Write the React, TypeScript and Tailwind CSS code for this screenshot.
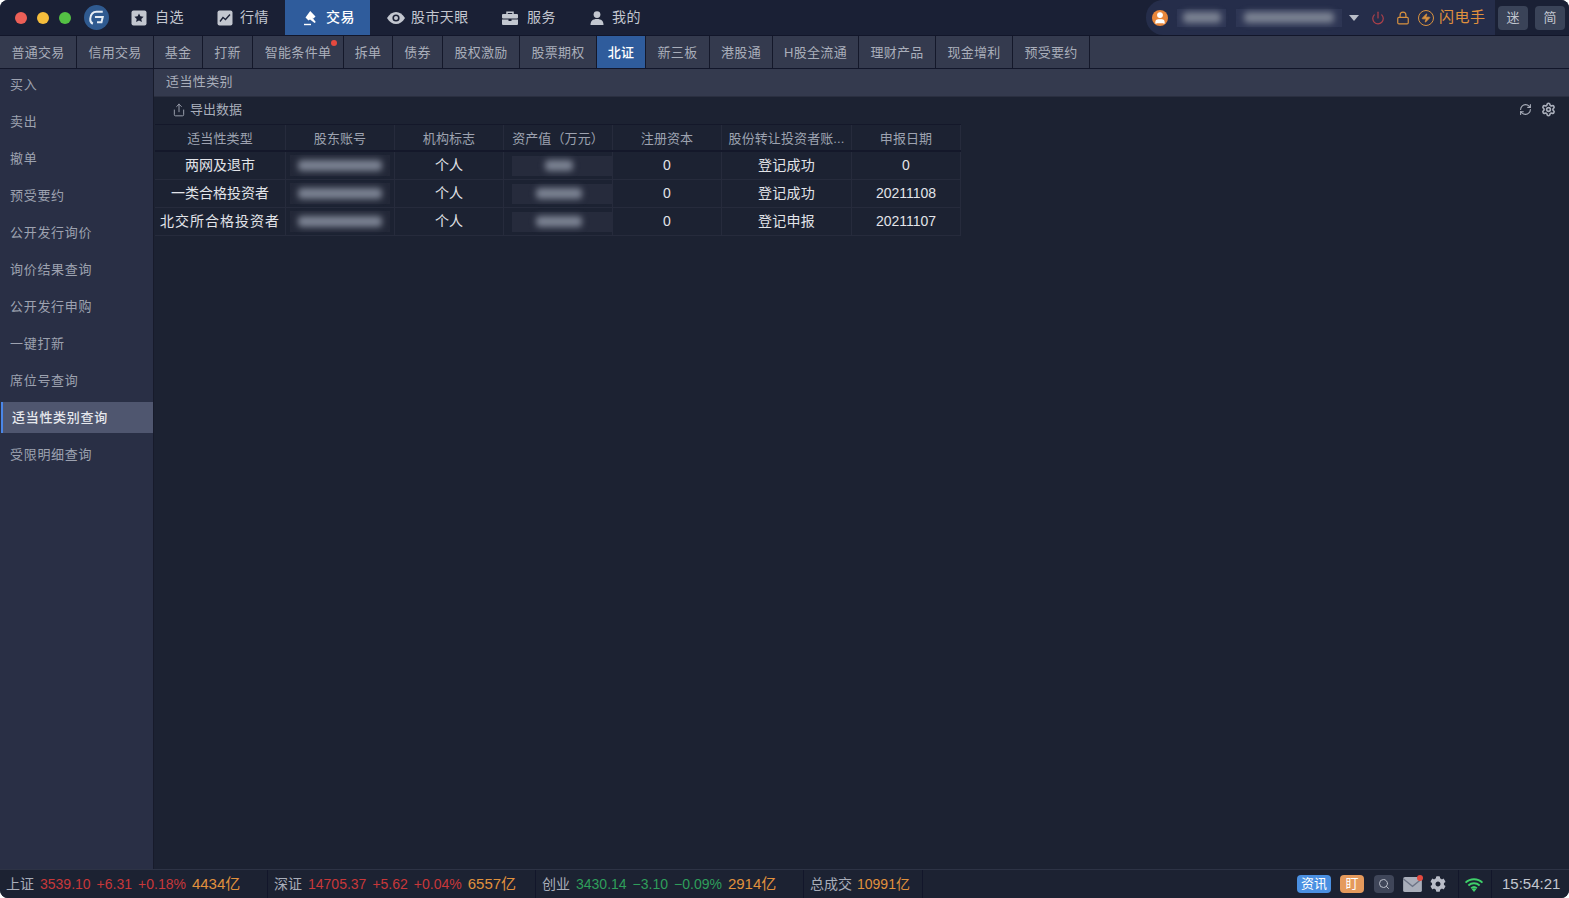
import { User, Share, RefreshCw, Settings, Search, Power, Lock, Zap } from 'lucide-react'
import { FaCog } from 'react-icons/fa'

const mainNav = [
  { label: '自选', icon: 'star', width: 'w-[85px]', pad: 'pl-[17px]', gap: 'gap-[8px]' },
  { label: '行情', icon: 'chart', width: 'w-[86px]', pad: 'pl-[18px]', gap: 'gap-[7px]' },
  { label: '交易', icon: 'gavel', width: 'w-[85px]', pad: 'pl-[17px]', gap: 'gap-[8px]', active: true },
  { label: '股市天眼', icon: 'eye', width: 'w-[115px]', pad: 'pl-[17px]', gap: 'gap-[6px]' },
  { label: '服务', icon: 'case', width: 'w-[86px]', pad: 'pl-[17px]', gap: 'gap-[9px]' },
  { label: '我的', icon: 'user', width: 'w-[86px]', pad: 'pl-[19px]', gap: 'gap-[8px]' },
]

const tabs = [
  { label: '普通交易', width: 'w-[77px]' },
  { label: '信用交易', width: 'w-[77px]' },
  { label: '基金', width: 'w-[49px]' },
  { label: '打新', width: 'w-[50px]' },
  { label: '智能条件单', width: 'w-[91px]', dot: true },
  { label: '拆单', width: 'w-[49px]' },
  { label: '债券', width: 'w-[50px]' },
  { label: '股权激励', width: 'w-[77px]' },
  { label: '股票期权', width: 'w-[77px]' },
  { label: '北证', width: 'w-[49px]', active: true },
  { label: '新三板', width: 'w-[64px]' },
  { label: '港股通', width: 'w-[63px]' },
  { label: 'H股全流通', width: 'w-[86px]' },
  { label: '理财产品', width: 'w-[77px]' },
  { label: '现金增利', width: 'w-[77px]' },
  { label: '预受要约', width: 'w-[77px]' },
]

const sideItems = ['买入', '卖出', '撤单', '预受要约', '公开发行询价', '询价结果查询', '公开发行申购', '一键打新', '席位号查询', '适当性类别查询', '受限明细查询']

const columns = [
  { title: '适当性类型', width: 'w-[131px]' },
  { title: '股东账号', width: 'w-[109px]' },
  { title: '机构标志', width: 'w-[109px]' },
  { title: '资产值（万元）', width: 'w-[109px]' },
  { title: '注册资本', width: 'w-[109px]' },
  { title: '股份转让投资者账...', width: 'w-[130px]' },
  { title: '申报日期', width: 'w-[109px]' },
]

const rows = [
  { type: '两网及退市', typeClass: '', value: 'w-[28px] -translate-x-[3px]', status: '登记成功', date: '0' },
  { type: '一类合格投资者', typeClass: '', value: 'w-[46px] -translate-x-[3px]', status: '登记成功', date: '20211108' },
  { type: '北交所合格投资者', typeClass: 'tracking-[1px]', value: 'w-[46px] -translate-x-[3px]', status: '登记申报', date: '20211107' },
]

const markets = [
  { name: '上证', width: 'w-[268px]', price: '3539.10', change: '+6.31', pct: '+0.18%', amount: '4434亿', color: 'text-[#c8383a]' },
  { name: '深证', width: 'w-[268px]', price: '14705.37', change: '+5.62', pct: '+0.04%', amount: '6557亿', color: 'text-[#c8383a]' },
  { name: '创业', width: 'w-[268px]', price: '3430.14', change: '−3.10', pct: '−0.09%', amount: '2914亿', color: 'text-[#2f9e5b]' },
]

function NavIcon({ name }: { name: string }) {
  if (name === 'star') {
    return (
      <svg viewBox="0 0 16 16" className="h-4 w-4">
        <rect x="0.5" y="0.5" width="15" height="15" rx="2" fill="#c3c7d0" />
        <path d="M8 3.4l1.4 2.9 3.2.4-2.3 2.2.6 3.1L8 10.5l-2.9 1.5.6-3.1-2.3-2.2 3.2-.4z" fill="#1a2035" />
      </svg>
    )
  }
  if (name === 'chart') {
    return (
      <svg viewBox="0 0 16 16" className="h-4 w-4">
        <rect x="0.5" y="0.5" width="15" height="15" rx="2" fill="#c3c7d0" />
        <path d="M3 11.5l3-4 2.5 2L13 4.5" fill="none" stroke="#1a2035" strokeWidth="1.3" />
      </svg>
    )
  }
  if (name === 'gavel') {
    return (
      <svg viewBox="0 0 16 16" className="h-4 w-4">
        <path d="M8.2 1l5.3 5.6-2 1.8-1.3-.9L13.8 12l-1.2 1-4.6-3.6-1.5 1.2-3-3.2z" fill="#fff" />
        <rect x="2" y="13.8" width="7" height="1.4" fill="#fff" />
      </svg>
    )
  }
  if (name === 'eye') {
    return (
      <svg viewBox="0 0 18 12" className="h-[12px] w-[18px]">
        <path d="M0 6C2.5 2 5.5 0 9 0s6.5 2 9 6c-2.5 4-5.500 6-9 6S2.500 10 0 6z" fill="#c3c7d0" />
        <circle cx="9" cy="6" r="3.6" fill="#1a2035" />
        <circle cx="9" cy="6" r="2" fill="#c3c7d0" />
      </svg>
    )
  }
  if (name === 'case') {
    return (
      <svg viewBox="0 0 16 14" className="h-[14px] w-4">
        <path d="M5 3V1.200h6V3" fill="none" stroke="#c3c7d0" strokeWidth="1.500" />
        <rect y="3" width="16" height="4.500" rx="1" fill="#c3c7d0" />
        <path d="M0 8.500h6.500v1.500h3V8.500H16V13a1 1 0 0 1-1 1H1a1 1 0 0 1-1-1z" fill="#c3c7d0" />
      </svg>
    )
  }
  return (
    <svg viewBox="0 0 14 14" className="h-[14px] w-[14px]">
      <circle cx="7" cy="3.600" r="3.400" fill="#c3c7d0" />
      <path d="M0.500 14c0-4 2-6 6.500-6s6.500 2 6.500 6z" fill="#c3c7d0" />
    </svg>
  )
}

function Blur({ className }: { className: string }) {
  return <div className={`h-[11px] rounded-sm bg-[#7b8292] blur-[3px] ${className}`} />
}

export default function App() {
  return (
    <div className="h-[898px] w-full overflow-hidden bg-white font-['Liberation_Sans','Noto_Sans_CJK_SC',sans-serif]">
      <div className="flex h-full flex-col overflow-hidden rounded-[8px] bg-[#1c2232]">
        {/* Top bar */}
        <div className="flex h-[36px] shrink-0 items-stretch border-b border-[#12162a] bg-[#1a2035]">
          <div className="flex w-[84px] items-center gap-[10px] pl-[15px]">
            <span className="h-[12px] w-[12px] rounded-full bg-[#ec5f57]" />
            <span className="h-[12px] w-[12px] rounded-full bg-[#f5bd3c]" />
            <span className="h-[12px] w-[12px] rounded-full bg-[#54c144]" />
          </div>
          <div className="flex w-[24px] items-center justify-center">
            <svg viewBox="0 0 24 24" className="h-[25px] w-[25px] shrink-0">
              <circle cx="12" cy="12" r="12" fill="#2f5a90" />
              <path d="M18 6.500H12C8.500 6.500 6.500 9 6 13C5.800 15 6.500 17 8.500 18" fill="none" stroke="#e6edf5" strokeWidth="1.900" />
              <path d="M10.500 11.500H18L16.800 16.500H12.500" fill="none" stroke="#e6edf5" strokeWidth="1.900" />
            </svg>
          </div>
          <div className="w-[6px]" />
          <div className="flex">
            {mainNav.map((item) => (
              <div
                key={item.label}
                className={`flex items-center text-[14px] ${item.width} ${item.pad} ${item.gap} ${item.active ? 'bg-[#2f5c9c] font-medium text-white' : 'text-[#c3c7d0]'}`}
              >
                <NavIcon name={item.icon} />
                <span className="tracking-[0.4px]">{item.label}</span>
              </div>
            ))}
          </div>
          <div className="flex-1" />
          <div className="flex w-[349px] items-center rounded-l-[17px] bg-[#252d4a] pl-[6px]">
            <span className="flex h-[16px] w-[16px] items-center justify-center overflow-hidden rounded-full bg-[#e8863a]">
              <User className="h-[14px] w-[14px] fill-white text-white" />
            </span>
            <div className="ml-[9px] flex h-[18px] w-[49px] items-center justify-center bg-[#2e3654]">
              <Blur className="w-[38px]" />
            </div>
            <div className="ml-[10px] flex h-[18px] w-[106px] items-center justify-center bg-[#2e3654]">
              <Blur className="w-[90px]" />
            </div>
            <span className="ml-[7px] h-0 w-0 border-x-[5px] border-t-[6px] border-x-transparent border-t-[#b9bdc8]" />
            <Power className="ml-[12px] h-[14px] w-[14px] text-[#b0414a]" strokeWidth={2} />
            <Lock className="ml-[11px] h-[14px] w-[14px] text-[#d9923f]" strokeWidth={2} />
            <span className="ml-[8px] flex h-[16px] w-[16px] items-center justify-center rounded-full border border-[#d9923f]">
              <Zap className="h-[10px] w-[10px] fill-[#d9923f] text-[#d9923f]" />
            </span>
            <span className="ml-[5px] text-[15px] tracking-[0.5px] text-[#e0913d]">闪电手</span>
          </div>
          <div className="flex items-center gap-[7px] pl-[3px] pr-[4px]">
            <span className="flex h-[24px] w-[30px] items-center justify-center rounded-sm bg-[#3a4358] text-[13px] text-[#c3c7d0]">迷</span>
            <span className="flex h-[24px] w-[30px] items-center justify-center rounded-sm bg-[#3a4358] text-[13px] text-[#c3c7d0]">简</span>
          </div>
        </div>

        {/* Tabs */}
        <div className="flex h-[33px] shrink-0 border-b border-[#12162a] bg-[#343a4e]">
          {tabs.map((tab) => (
            <div
              key={tab.label}
              className={`relative flex items-center justify-center border-r border-[#14182a] pt-[2px] text-[13px] tracking-[0.3px] ${tab.width} ${tab.active ? 'bg-[#2f5c9c] font-medium text-white' : 'text-[#a9aeba]'}`}
            >
              {tab.label}
              {tab.dot && <span className="absolute right-[6px] top-[4px] h-[6px] w-[6px] rounded-full bg-[#e5493f]" />}
            </div>
          ))}
        </div>

        <div className="flex min-h-0 flex-1">
          {/* Sidebar */}
          <div className="flex w-[154px] shrink-0 flex-col gap-[6px] border-r border-[#171b2b] bg-[#292f45] pl-[1px]">
            {sideItems.map((item) => {
              const active = item === '适当性类别查询'
              return (
                <div
                  key={item}
                  className={`flex h-[31px] items-center text-[13px] tracking-[0.7px] ${active ? 'border-l-2 border-[#4a86e8] bg-[#4f566f] pl-[9px] font-medium text-[#e6e8ed]' : 'pl-[9px] text-[#9da2b0]'}`}
                >
                  {item}
                </div>
              )
            })}
          </div>

          {/* Content */}
          <div className="flex min-w-0 flex-1 flex-col">
            <div className="flex h-[28px] shrink-0 items-center border-b border-[#2a2f40] bg-[#343a4e] pb-[2px] pl-[12px] text-[13px] tracking-[0.4px] text-[#a9aeba]">适当性类别</div>
            <div className="flex h-[27px] shrink-0 items-center justify-between pb-[2px] pl-[18px] pr-[13px]">
              <div className="flex items-center gap-[4px] text-[13px] text-[#a9aeba]">
                <Share className="h-[14px] w-[14px]" strokeWidth={1.5} />
                导出数据
              </div>
              <div className="flex items-center gap-[9px] text-[#a9aeba]">
                <RefreshCw className="h-[13px] w-[13px]" strokeWidth={2} />
                <Settings className="h-[15px] w-[15px]" strokeWidth={2.6} />
              </div>
            </div>

            <div className="ml-[1px] w-[806px] border-t border-[#14182a]">
              <div className="flex h-[27px] border-b-2 border-[#14182a]">
                {columns.map((col) => (
                  <div key={col.title} className={`flex items-center justify-center border-r border-[#262b3c] pt-[2px] text-[13px] tracking-[0.1px] text-[#9da2b0] ${col.width}`}>
                    {col.title}
                  </div>
                ))}
              </div>
              {rows.map((row) => (
                <div key={row.type} className="flex h-[28px] border-b border-[#262b3c] text-[14px] text-[#e2e4e9]">
                  <div className={`flex items-center justify-center whitespace-nowrap border-r border-[#262b3c] ${columns[0].width} ${row.typeClass}`}>{row.type}</div>
                  <div className={`flex items-center justify-center border-r border-[#262b3c] ${columns[1].width}`}>
                    <div className="flex h-[21px] w-[100px] items-center justify-center bg-[#232838]">
                      <Blur className="w-[84px]" />
                    </div>
                  </div>
                  <div className={`flex items-center justify-center border-r border-[#262b3c] ${columns[2].width}`}>个人</div>
                  <div className={`flex items-center justify-center border-r border-[#262b3c] ${columns[3].width}`}>
                    <div className="ml-[8px] flex h-[20px] w-[106px] items-center justify-center bg-[#262b3c]">
                      <Blur className={row.value} />
                    </div>
                  </div>
                  <div className={`flex items-center justify-center border-r border-[#262b3c] ${columns[4].width}`}>0</div>
                  <div className={`flex items-center justify-center border-r border-[#262b3c] tracking-[0.2px] ${columns[5].width}`}>{row.status}</div>
                  <div className={`flex items-center justify-center border-r border-[#262b3c] ${columns[6].width}`}>{row.date}</div>
                </div>
              ))}
            </div>
          </div>
        </div>

        {/* Status bar */}
        <div className="flex h-[29px] shrink-0 items-center border-t border-[#2d3345] bg-[#1c2232] text-[14px]">
          {markets.map((m) => (
            <div key={m.name} className={`flex h-full items-center gap-[6px] border-r border-[#12162a] pl-[6px] ${m.width}`}>
              <span className="text-[#a9aeba]">{m.name}</span>
              <span className={m.color}>{m.price}</span>
              <span className={m.color}>{m.change}</span>
              <span className={m.color}>{m.pct}</span>
              <span className="text-[15px] text-[#e0913d]">{m.amount}</span>
            </div>
          ))}
          <div className="flex h-full w-[119px] items-center gap-[5px] border-r border-[#12162a] pl-[6px]">
            <span className="text-[#a9aeba]">总成交</span>
            <span className="text-[#e0913d]">10991亿</span>
          </div>
          <div className="flex-1" />
          <div className="flex h-full items-center">
            <span className="flex h-[18px] w-[34px] items-center justify-center rounded-sm bg-[#4a90e2] text-[13px] text-white">资讯</span>
            <span className="ml-[9px] flex h-[18px] w-[24px] items-center justify-center rounded-sm bg-[#e59a5c] text-[13px] text-white">盯</span>
            <span className="ml-[10px] flex h-[18px] w-[20px] items-center justify-center rounded-sm bg-[#3f4659]">
              <Search className="h-[12px] w-[12px] text-[#b9bdc8]" />
            </span>
            <span className="relative ml-[9px] flex">
              <svg viewBox="0 0 20 16" className="h-[15px] w-[19px]">
                <rect width="20" height="16" rx="2" fill="#a9aeba" />
                <path d="M0 2l10 8 10-8" fill="none" stroke="#6d7486" strokeWidth="1.4" />
              </svg>
              <span className="absolute -right-[1px] -top-[2px] h-[6px] w-[6px] rounded-full bg-[#e5493f]" />
            </span>
            <FaCog className="ml-[8px] h-[16px] w-[16px] text-[#b9bdc8]" />
            <span className="ml-[12px] h-full border-l border-[#12162a]" />
            <svg viewBox="0 0 20 16" className="ml-[5px] h-[15px] w-[20px]">
              <path d="M1 6a13 13 0 0 1 18 0M4 9a9 9 0 0 1 12 0M7 12a4.500 4.500 0 0 1 6 0" fill="none" stroke="#3fd06a" strokeWidth="2" />
              <path d="M10 16l-2.400-3a3.500 3.500 0 0 1 4.800 0z" fill="#3fd06a" />
            </svg>
            <span className="ml-[7px] h-full border-l border-[#12162a]" />
            <span className="w-[77px] pl-[10px] text-[15px] text-[#c3c7d0]">15:54:21</span>
          </div>
        </div>
      </div>
    </div>
  )
}
